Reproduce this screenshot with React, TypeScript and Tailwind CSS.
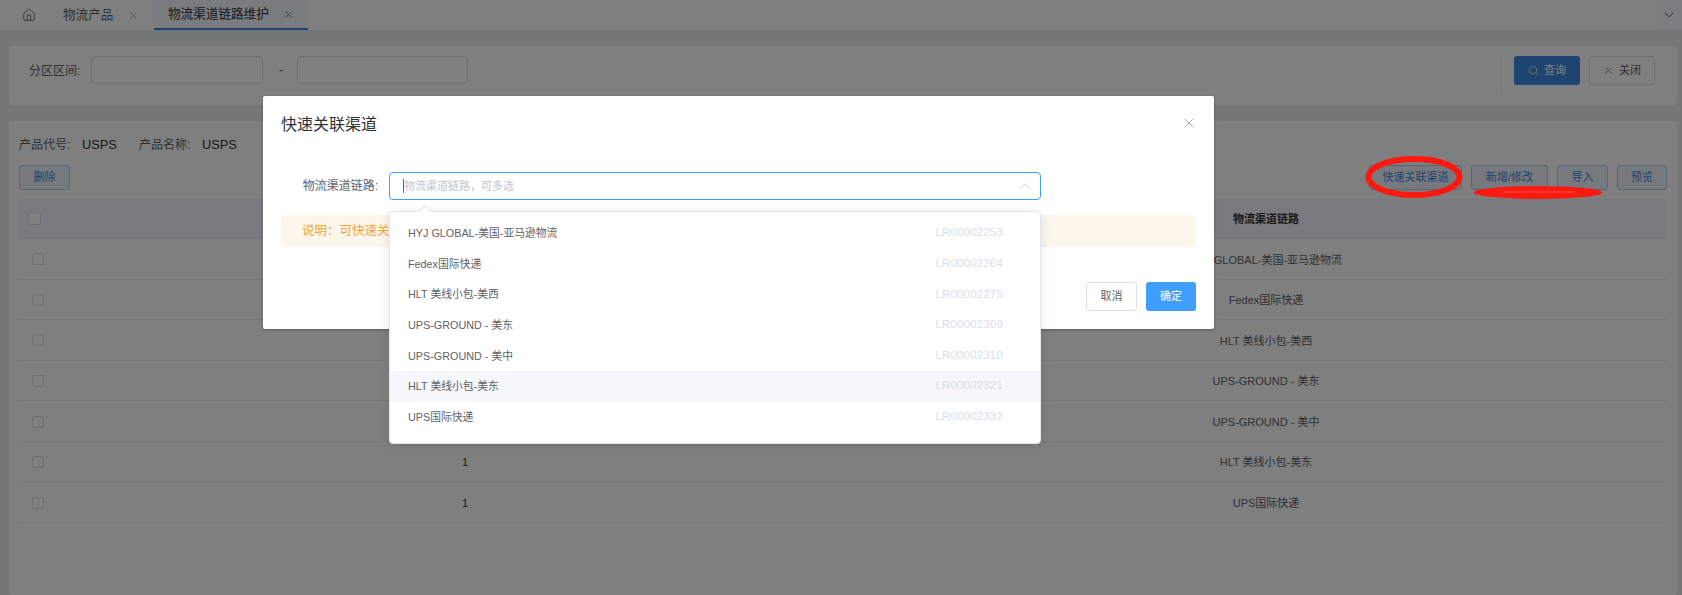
import { ChevronDown, ChevronUp, House, Search, X } from 'lucide-react';

const channels = [
  { name: 'HYJ GLOBAL-美国-亚马逊物流', code: 'LR00002253', sort: '' },
  { name: 'Fedex国际快递', code: 'LR00002264', sort: '' },
  { name: 'HLT 美线小包-美西', code: 'LR00002275', sort: '' },
  { name: 'UPS-GROUND - 美东', code: 'LR00002309', sort: '' },
  { name: 'UPS-GROUND - 美中', code: 'LR00002310', sort: '' },
  { name: 'HLT 美线小包-美东', code: 'LR00002321', sort: '1' },
  { name: 'UPS国际快递', code: 'LR00002332', sort: '1' },
];

const actions = [
  { label: '快速关联渠道', width: 'w-[93px]' },
  { label: '新增/修改', width: 'w-[77px]' },
  { label: '导入', width: 'w-[51px]' },
  { label: '预览', width: 'w-[50px]' },
];

function TabBar() {
  return (
    <div className="flex h-[31px] items-stretch border-b border-[#e4e7ed] bg-white text-[12.6px] text-[#303133]">
      <div className="flex w-[56px] items-center justify-center pl-[1px] text-[#606266]">
        <House size={14} strokeWidth={1.5} />
      </div>
      <div className="flex w-[98px] items-center pl-[7px] text-[#606266]">
        <span>物流产品</span>
        <X size={11} strokeWidth={1.5} className="ml-[15px] text-[#909399]" />
      </div>
      <div className="flex w-[154px] items-center border-b-2 border-[#3b8ae0] bg-[#f4f7fd] pl-[14px]">
        <span>物流渠道链路维护</span>
        <X size={11} strokeWidth={1.5} className="ml-[14px] text-[#606266]" />
      </div>
      <div className="ml-auto flex w-[27px] items-center justify-center bg-[#fafbfe] text-[#606266]">
        <ChevronDown size={16} strokeWidth={1.5} />
      </div>
    </div>
  );
}

function SearchPanel() {
  return (
    <div className="mx-[9px] mr-[5px] mt-[15px] flex h-[59px] rounded-[3px] bg-white pt-[10px] text-[12px] text-[#606266]">
      <span className="ml-[20px] mt-[6px] w-[62px]">分区区间:</span>
      <div className="h-[28px] w-[172px] rounded-[4px] border border-[#dcdfe6]" />
      <span className="w-[34px] pl-[16px] pt-[5px]">-</span>
      <div className="h-[28px] w-[171px] rounded-[4px] border border-[#dcdfe6]" />
      <div className="ml-auto flex h-[38px] border-l border-[#ebeef5] pl-[12px] pr-[22px] text-[11px]">
        <button className="flex h-[29px] w-[66px] items-center justify-center gap-[5px] rounded-[3px] bg-[#3b8ae0] text-white">
          <Search size={11} strokeWidth={1.5} />
          查询
        </button>
        <button className="ml-[9px] flex h-[29px] w-[66px] items-center justify-center gap-[5px] rounded-[3px] border border-[#dcdfe6] text-[#606266]">
          <X size={11} strokeWidth={1.5} />
          关闭
        </button>
      </div>
    </div>
  );
}

function TablePanel() {
  return (
    <div className="ml-[9px] mr-[5px] mt-[16px] h-[474px] rounded-[3px] bg-white px-[10px] pt-[15px]">
      <div className="flex h-[18px] items-center text-[12px] text-[#606266]">
        <span className="w-[63px]">产品代号:</span>
        <span className="w-[57px] text-[12.8px] text-[#303133]">USPS</span>
        <span className="w-[63px]">产品名称:</span>
        <span className="text-[12.8px] text-[#303133]">USPS</span>
      </div>
      <div className="mt-[11px] flex gap-[9px] text-[11px] text-[#3e86d8]">
        <button className="mr-auto h-[25px] w-[51px] rounded-[3px] border border-[#a9cdf3] bg-[#ecf5ff]">删除</button>
        {actions.map((item) => (
          <button key={item.label} className={`h-[25px] rounded-[3px] border border-[#a9cdf3] bg-[#ecf5ff] ${item.width}`}>
            {item.label}
          </button>
        ))}
      </div>
      <div className="mt-[9px] grid h-[40px] grid-cols-[45px_802px_800px] items-center border-b border-[#ebeef5] bg-[#f2f5fb] text-center text-[11px] font-bold text-[#303133]">
        <span className="ml-[9px] block h-[13px] w-[13px] rounded-[2px] border border-[#dcdfe6] bg-white" />
        <span />
        <span className="pt-[2px]">物流渠道链路</span>
      </div>
      {channels.map((row) => (
        <div
          key={row.code}
          className="grid h-[40.57px] grid-cols-[45px_802px_800px] items-center border-b border-[#ebeef5] text-center text-[11px] text-[#606266]"
        >
          <span className="ml-[13px] mt-[1px] block h-[12px] w-[12px] rounded-[2px] border border-[#dcdfe6] bg-white" />
          <span className="pt-[2px] text-[#303133]">{row.sort}</span>
          <span className="pt-[2px]">{row.name}</span>
        </div>
      ))}
    </div>
  );
}

function QuickLinkDialog() {
  return (
    <div className="absolute left-[263px] top-[96px] h-[233px] w-[951px] rounded-[2px] bg-white px-[18px] shadow-[0_1px_3px_rgba(0,0,0,0.3)]">
      <div className="flex h-[76px] items-start justify-between pt-[19px]">
        <h2 className="text-[16px] leading-[20px] text-[#303133]">快速关联渠道</h2>
        <X size={16} strokeWidth={1.1} className="mr-[-1px] text-[#909399]" />
      </div>
      <div className="flex items-center">
        <label className="w-[108px] pr-[11px] text-right text-[12px] text-[#606266]">物流渠道链路:</label>
        <div className="relative flex h-[28px] w-[652px] items-center rounded-[4px] border border-[#409eff] pl-[13px] text-[11px] text-[#c0c4cc]">
          <span className="h-[14px] w-px bg-[#606266]" />
          <span>物流渠道链路{'\uFF0C'}可多选</span>
          <ChevronUp size={18} strokeWidth={1.1} className="ml-auto mr-[6px] text-[#c0c4cc]" />
          <div className="absolute left-[-1px] top-[38px] z-10 w-[652px] rounded-[4px] border border-[#e4e7ed] bg-white pb-[11px] pt-[6px] shadow-[0_2px_12px_rgba(0,0,0,0.1)]">
            <span className="absolute left-[31px] top-[-5px] h-[8px] w-[8px] rotate-45 border-l border-t border-[#e4e7ed] bg-white" />
            {channels.map((row, index) => (
              <div
                key={row.code}
                className={`flex h-[30.6px] items-center justify-between pl-[18px] pr-[37px] text-[10.8px] text-[#606266] ${index === 5 ? 'bg-[#f5f7fa]' : ''}`}
              >
                <span>{row.name}</span>
                <span className="text-[11.8px] text-[#dcdee6]">{row.code}</span>
              </div>
            ))}
          </div>
        </div>
      </div>
      <div className="mt-[15px] flex h-[32px] items-center rounded-[4px] bg-[#fdf6ec] pl-[21px] text-[12.5px] text-[#f5a33c]">
        说明{'\uFF1A'}可快速关联多个物流渠道
      </div>
      <div className="mt-[35px] flex justify-end gap-[9px] text-[11px]">
        <button className="h-[29px] w-[51px] rounded-[3px] border border-[#dcdfe6] text-[#606266]">取消</button>
        <button className="h-[29px] w-[50px] rounded-[3px] bg-[#409eff] text-white">确定</button>
      </div>
    </div>
  );
}

export default function App() {
  return (
    <div className="relative h-[595px] w-full overflow-hidden bg-[#ecefee] [font-family:'Liberation_Sans','Noto_Sans_CJK_SC',sans-serif]">
      <TabBar />
      <SearchPanel />
      <TablePanel />
      <div className="absolute inset-0 bg-black/50" />
      <QuickLinkDialog />
      {/* hand-drawn red marks on the screenshot */}
      <svg className="pointer-events-none absolute left-0 top-0" width="1682" height="595">
        <ellipse cx="1414" cy="177" rx="45.5" ry="18" fill="none" stroke="#fb1a10" strokeWidth="6" />
        <ellipse cx="1538" cy="192.5" rx="64.5" ry="6.5" fill="#fb1a10" />
        <path d="M1503 192h72" stroke="#f4503f" strokeWidth="1" />
      </svg>
    </div>
  );
}
